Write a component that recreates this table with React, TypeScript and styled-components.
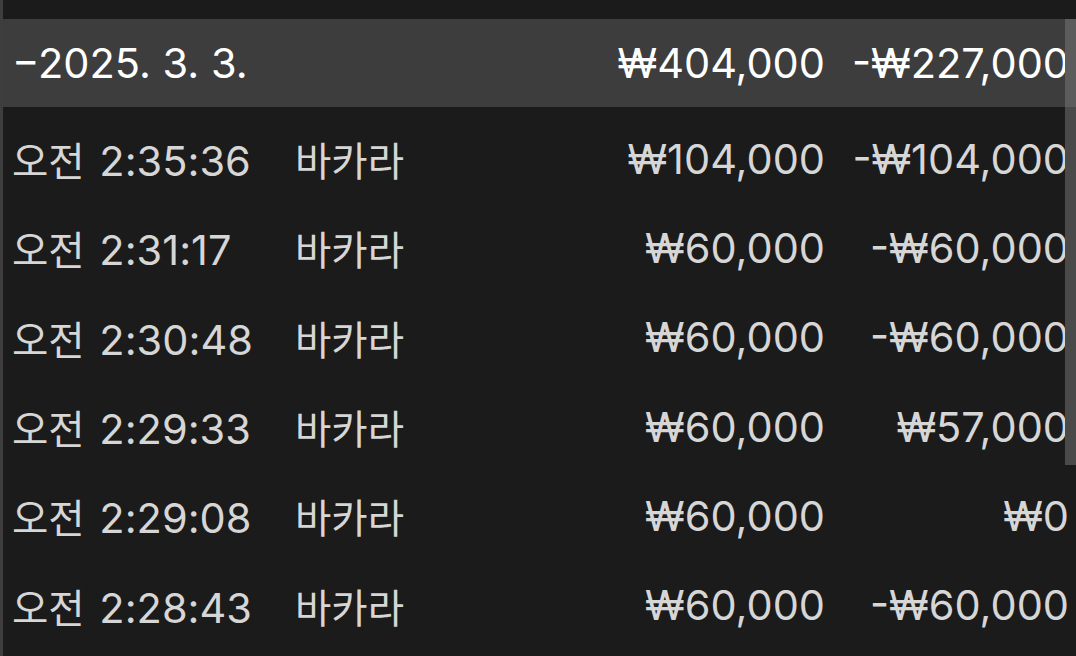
import React from "react";
import styled, { createGlobalStyle } from "styled-components";

const GlobalStyle = createGlobalStyle`
  html, body {
    margin: 0;
    padding: 0;
    background: #1b1b1b;
  }
  body {
    font-family: "Inter", "Noto Sans CJK KR", sans-serif;
    overflow: hidden;
  }
`;

const Frame = styled.div`
  position: relative;
  width: 1076px;
  height: 656px;
  background: #1b1b1b;
  border-left: 3px solid #3e3e3e;
  box-sizing: border-box;
  padding-top: 19px;
  overflow: hidden;
`;

const Row = styled.div<{ $head?: boolean }>`
  display: grid;
  grid-template-columns: 283px 1fr 230px 244px;
  align-items: center;
  box-sizing: border-box;
  height: ${(p) => (p.$head ? "88px" : "89.3px")};
  padding: ${(p) => (p.$head ? "0" : "14px")} 7px 0 9px;
  background: ${(p) => (p.$head ? "#3d3d3d" : "transparent")};
  color: ${(p) => (p.$head ? "#ffffff" : "#d6d6d6")};
  font-size: 41.5px;
  letter-spacing: 0;
  white-space: nowrap;
`;

const Cell = styled.span<{ $right?: boolean }>`
  text-align: ${(p) => (p.$right ? "right" : "left")};
`;

const Ko = styled.span`
  font-size: 39.5px;
`;

const Period = styled(Ko)`
  margin-right: 3px;
`;

const ScrollTrack = styled.div`
  position: absolute;
  right: 0;
  top: 19px;
  width: 11px;
  height: 446px;
  background: #4a4a4a;
`;

const ScrollThumb = styled.div`
  height: 88px;
  background: #5c5c5c;
`;

const rows = [
  { time: "2:35:36", game: "바카라", bet: "₩104,000", result: "-₩104,000" },
  { time: "2:31:17", game: "바카라", bet: "₩60,000", result: "-₩60,000" },
  { time: "2:30:48", game: "바카라", bet: "₩60,000", result: "-₩60,000" },
  { time: "2:29:33", game: "바카라", bet: "₩60,000", result: "₩57,000" },
  { time: "2:29:08", game: "바카라", bet: "₩60,000", result: "₩0" },
  { time: "2:28:43", game: "바카라", bet: "₩60,000", result: "-₩60,000" },
];

export default function App() {
  return (
    <>
      <GlobalStyle />
      <Frame>
        <Row $head>
          <Cell>−2025. 3. 3.</Cell>
          <Cell />
          <Cell $right>₩404,000</Cell>
          <Cell $right>-₩227,000</Cell>
        </Row>
        {rows.map((r, i) => (
          <Row key={i}>
            <Cell>
              <Period>오전</Period> {r.time}
            </Cell>
            <Cell>
              <Ko>{r.game}</Ko>
            </Cell>
            <Cell $right>{r.bet}</Cell>
            <Cell $right>{r.result}</Cell>
          </Row>
        ))}
        <ScrollTrack>
          <ScrollThumb />
        </ScrollTrack>
      </Frame>
    </>
  );
}
